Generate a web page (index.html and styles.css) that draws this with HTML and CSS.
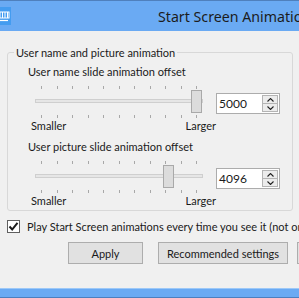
FILE: index.html
```html
<!DOCTYPE html>
<html>
<head>
<meta charset="utf-8">
<link rel="stylesheet" href="styles.css">
</head>
<body>
<div class="window">
  <div class="titlebar">
    <svg class="app-icon" viewBox="0 0 18 18" width="18" height="18">
      <rect x="0" y="0" width="18" height="18" fill="#449cf0"/>
      <rect x="2" y="5" width="14" height="6" fill="none" stroke="#ffffff" stroke-width="1"/>
      <path d="M4.5 5v6M7 5v6M9.5 5v6M12 5v6M14.5 5v6" stroke="#ffffff" stroke-width="1"/>
      <path d="M3 13.5h12" stroke="#ffffff" stroke-width="1.2"/>
    </svg>
    <div class="title">Start Screen Animation Settings</div>
  </div>
  <div class="client">
    <fieldset class="group">
      <legend>User name and picture animation</legend>
      <div class="setting">
        <div class="setting-label">User name slide animation offset</div>
        <div class="slider-row">
          <div class="slider">
            <div class="ticks"><i></i><i></i><i></i><i></i><i></i><i></i><i></i><i></i><i></i><i></i><i></i></div>
            <div class="track"></div>
            <div class="ticks bottom"><i></i><i></i><i></i><i></i><i></i><i></i><i></i><i></i><i></i><i></i><i></i></div>
            <div class="thumb" style="left:156px"></div>
          </div>
          <div class="spin">
            <div class="spin-value">5000</div>
            <div class="spin-buttons">
              <div class="spin-btn"><svg viewBox="0 0 7 4" width="7" height="4"><path d="M0.5 3.5L3.5 0.5L6.5 3.5" fill="none" stroke="#222" stroke-width="1.1"/></svg></div>
              <div class="spin-btn"><svg viewBox="0 0 7 4" width="7" height="4"><path d="M0.5 0.5L3.5 3.5L6.5 0.5" fill="none" stroke="#222" stroke-width="1.1"/></svg></div>
            </div>
          </div>
        </div>
        <div class="range"><span>Smaller</span><span>Larger</span></div>
      </div>
      <div class="setting">
        <div class="setting-label">User picture slide animation offset</div>
        <div class="slider-row">
          <div class="slider">
            <div class="ticks"><i></i><i></i><i></i><i></i><i></i><i></i><i></i><i></i><i></i><i></i><i></i></div>
            <div class="track"></div>
            <div class="ticks bottom"><i></i><i></i><i></i><i></i><i></i><i></i><i></i><i></i><i></i><i></i><i></i></div>
            <div class="thumb" style="left:128px"></div>
          </div>
          <div class="spin">
            <div class="spin-value">4096</div>
            <div class="spin-buttons">
              <div class="spin-btn"><svg viewBox="0 0 7 4" width="7" height="4"><path d="M0.5 3.5L3.5 0.5L6.5 3.5" fill="none" stroke="#222" stroke-width="1.1"/></svg></div>
              <div class="spin-btn"><svg viewBox="0 0 7 4" width="7" height="4"><path d="M0.5 0.5L3.5 3.5L6.5 0.5" fill="none" stroke="#222" stroke-width="1.1"/></svg></div>
            </div>
          </div>
        </div>
        <div class="range"><span>Smaller</span><span>Larger</span></div>
      </div>
    </fieldset>
    <div class="check-row">
      <span class="checkbox"><svg viewBox="0 0 11 11" width="11" height="11"><path d="M1.5 5.5L4.2 8.5L9.5 1.8" fill="none" stroke="#1a1a1a" stroke-width="2"/></svg></span>
      <span class="check-text">Play Start Screen animations every time you see it (not only the first time)</span>
    </div>
    <div class="buttons">
      <div class="btn btn-apply">Apply</div>
      <div class="btn btn-rec">Recommended settings</div>
      <div class="btn btn-close">Close</div>
    </div>
  </div>
  <div class="taskbar"></div>
</div>
</body>
</html>
```

FILE: styles.css
```css
* { box-sizing: border-box; }
html, body { margin: 0; padding: 0; }
body {
  width: 299px;
  height: 298px;
  overflow: hidden;
  background: #f0f0f0;
  font-family: Lato, "Noto Sans", sans-serif;
  font-size: 11px;
  color: #1a1a1a;
}
.window {
  width: 380px;
  display: flex;
  flex-direction: column;
}
.titlebar {
  height: 31px;
  background: #6aaaf3;
  border-top: 1px solid #4f80bd;
  display: flex;
  align-items: center;
  white-space: nowrap;
}
.app-icon { flex: none; margin-left: -7px; }
.title {
  margin-left: 147px;
  font-family: "Noto Sans", sans-serif;
  font-size: 14.2px;
  color: #1c1c1c;
}
.client {
  height: 257px;
  padding: 14px 0 0 7px;
  background: #f0f0f0;
}
.group {
  margin: 0;
  width: 286px;
  min-width: 0;
  border: 1px solid #d8d8d8;
  border-radius: 3px;
  padding: 4px 6px 2px;
}
.group legend {
  padding: 0 2px;
  line-height: 15px;
}
.setting-label {
  margin-left: 14px;
  line-height: 15px;
  white-space: nowrap;
}
.slider-row {
  display: flex;
  margin-top: 6px;
}
.slider {
  position: relative;
  width: 168px;
  height: 33px;
  margin-left: 21px;
  display: flex;
  flex-direction: column;
}
.ticks {
  display: flex;
  justify-content: space-between;
  padding: 0 6px;
  height: 3px;
  margin-top: 1px;
}
.ticks.bottom { margin-top: 12px; }
.ticks i {
  display: block;
  width: 1px;
  height: 3px;
  background: #a8a8a8;
}
.track {
  margin-top: 10px;
  height: 4px;
  border: 1px solid #cfcfcf;
  background: #e6e6e6;
}
.thumb {
  position: absolute;
  top: 5px;
  width: 11px;
  height: 23px;
  background: #dcdcdc;
  border: 1px solid #a9a9a9;
}
.spin {
  margin-left: 13px;
  margin-top: 8px;
  width: 64px;
  height: 21px;
  background: #ffffff;
  border: 1px solid #acacac;
  display: flex;
  padding: 1px;
}
.spin-value {
  flex: 1;
  font-size: 12px;
  line-height: 17px;
  padding-left: 1px;
}
.spin-buttons {
  width: 16px;
  display: flex;
  flex-direction: column;
}
.spin-btn {
  flex: 1;
  display: flex;
  align-items: center;
  justify-content: center;
  background: #ececec;
  border: 1px solid #b4b4b4;
}
.spin-btn + .spin-btn { border-top: none; }
.range {
  display: flex;
  justify-content: space-between;
  width: 185px;
  margin-left: 17px;
  line-height: 15px;
  margin-bottom: 6px;
}
.setting + .setting .range { margin-bottom: 0; }
.check-row {
  margin-top: 8px;
  display: flex;
  align-items: center;
  height: 14px;
  white-space: nowrap;
}
.checkbox {
  width: 13px;
  height: 13px;
  border: 1px solid #5f5f5f;
  background: #fff;
  display: flex;
  align-items: center;
  justify-content: center;
  flex: none;
}
.check-text { margin-left: 7px; }
.buttons {
  display: flex;
  margin-top: 9px;
  margin-left: 61px;
}
.btn {
  height: 22px;
  background: #e1e1e1;
  border: 1px solid #adadad;
  display: flex;
  align-items: center;
  justify-content: center;
  flex: none;
}
.btn-apply { width: 75px; }
.btn-rec { width: 130px; margin-left: 15px; }
.btn-close { width: 75px; margin-left: 9px; }
.taskbar {
  height: 10px;
  background: #6aaaf3;
  border-top: 1px solid #9cc8f8;
  border-bottom: 1px solid #4b7fbf;
}
```
